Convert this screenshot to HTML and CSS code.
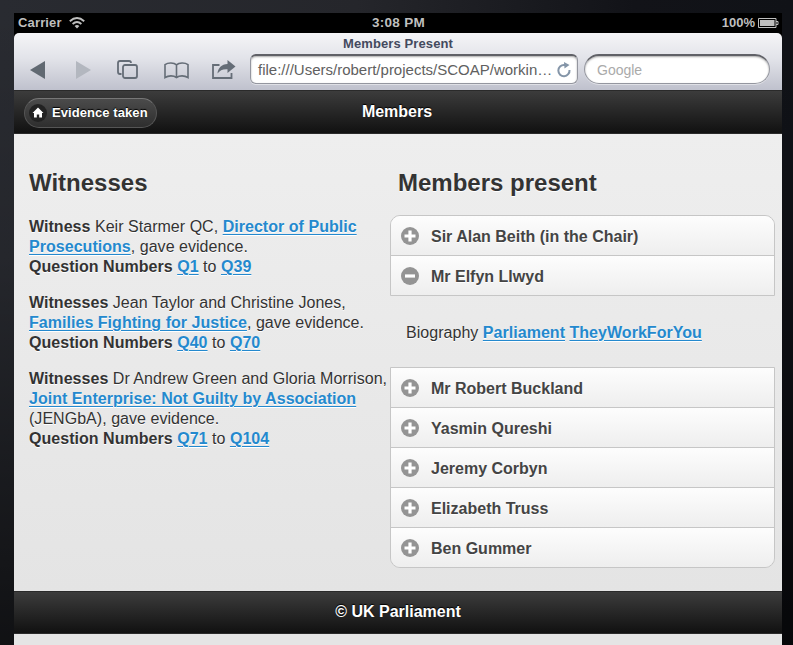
FILE: index.html
```html
<!DOCTYPE html>
<html lang="en">
<head>
<meta charset="utf-8">
<title>Members Present</title>
<link rel="stylesheet" href="styles.css">
</head>
<body>
<svg class="defs" width="0" height="0" aria-hidden="true">
  <symbol id="plus" viewBox="0 0 18 18"><circle cx="9" cy="9" r="9" fill="#949494"/><path d="M9 3.5v11M3.5 9h11" stroke="#fff" stroke-width="3.2"/></symbol>
  <symbol id="minus" viewBox="0 0 18 18"><circle cx="9" cy="9" r="9" fill="#949494"/><path d="M4 9h10" stroke="#fff" stroke-width="3.2"/></symbol>
</svg>
<div class="screen">
  <div class="status">
    <span class="carrier">Carrier
      <svg width="16" height="12" viewBox="0 0 16 12" fill="none" stroke="#bfbfbf" stroke-width="1.9"><path d="M.8 4.2Q8-2.2 15.2 4.2M3.6 7Q8 3.2 12.4 7"/><path d="M5.6 9.1Q8 7 10.4 9.1L8 11.6z" fill="#bfbfbf" stroke="none"/></svg>
    </span>
    <span class="clock">3:08 PM</span>
    <span class="battery">100%
      <svg width="21" height="10" viewBox="0 0 21 10"><path d="M.5.5h17.5v9H.5zM18 3.5h2v3h-2" fill="none" stroke="#bfbfbf"/><path d="M2 2h14.500v6H2z" fill="#bfbfbf"/></svg>
    </span>
  </div>
  <div class="browser">
    <div class="tab-title">Members Present</div>
    <div class="tools">
      <div class="nav">
        <svg width="15" height="18" viewBox="0 0 15 18"><path d="M0 9 15 0v18z" fill="#616972"/></svg>
        <svg width="15" height="18" viewBox="0 0 15 18"><path d="M15 9 0 0v18z" fill="#b3b7bf"/></svg>
        <svg width="21" height="19" viewBox="0 0 21 19" fill="none" stroke="#656d77" stroke-width="1.8"><path d="M4.500 14H3Q1 14 1 12V3Q1 1 3 1h9Q14 1 14 3"/><rect x="6" y="5" width="14" height="13" rx="2"/></svg>
        <svg width="25" height="17" viewBox="0 0 25 17" fill="none" stroke="#656d77" stroke-width="1.6"><path d="M12.500 2.800C10 .4 4 .4 1 2.600V15.500C4.500 13.300 9.500 13.300 12.500 15.500C15.500 13.300 20.500 13.300 24 15.500V2.600C21 .4 15 .4 12.500 2.800V15.500"/></svg>
        <svg width="24" height="19" viewBox="0 0 24 19"><path d="M7.500 5H1v13h18.500v-5" fill="none" stroke="#656d77" stroke-width="1.8"/><path d="M15.500 0 23.500 6.500 15.500 13V9.300C10.500 9 8 10.500 5.500 13.500C6 8 9.500 4.200 15.500 4z" fill="#656d77"/></svg>
      </div>
      <div class="address"><span class="url">file:///Users/robert/projects/SCOAP/workin…</span>
        <svg width="14" height="16" viewBox="0 0 14 16"><path d="M9 3H7.200A5.600 5.600 0 1 0 12.500 8" fill="none" stroke="#8495a8" stroke-width="2"/><path d="M7 0l5.500 3L7.500 6.500z" fill="#8495a8"/></svg>
      </div>
      <div class="search">Google</div>
    </div>
  </div>
  <header class="bar header">
    <a class="back"><svg width="18" height="18" viewBox="0 0 18 18"><circle cx="9" cy="9" r="9" fill="#222"/><path d="M9 3.500 3.500 9H5v4.500h2.800v-3h2.400v3H13V9h1.500z" fill="#fff"/></svg><span>Evidence taken</span></a>
    <h1>Members</h1>
  </header>
  <main class="content">
    <section class="witnesses">
      <h2>Witnesses</h2>
      <p><b>Witness</b> Keir Starmer QC, <a>Director of Public<br>Prosecutions</a>, gave evidence.<br><b>Question Numbers</b> <a>Q1</a> to <a>Q39</a></p>
      <p><b>Witnesses</b> Jean Taylor and Christine Jones,<br><a>Families Fighting for Justice</a>, gave evidence.<br><b>Question Numbers</b> <a>Q40</a> to <a>Q70</a></p>
      <p><b>Witnesses</b> Dr Andrew Green and Gloria Morrison,<br><a>Joint Enterprise: Not Guilty by Association</a><br>(JENGbA), gave evidence.<br><b>Question Numbers</b> <a>Q71</a> to <a>Q104</a></p>
    </section>
    <section class="members">
      <h2>Members present</h2>
      <div class="list first">
        <div class="row"><svg><use href="#plus"/></svg><span>Sir Alan Beith (in the Chair)</span></div>
        <div class="row"><svg><use href="#minus"/></svg><span>Mr Elfyn Llwyd</span></div>
      </div>
      <div class="bio"><span>Biography <a>Parliament</a> <a>TheyWorkForYou</a></span></div>
      <div class="list last">
        <div class="row"><svg><use href="#plus"/></svg><span>Mr Robert Buckland</span></div>
        <div class="row"><svg><use href="#plus"/></svg><span>Yasmin Qureshi</span></div>
        <div class="row"><svg><use href="#plus"/></svg><span>Jeremy Corbyn</span></div>
        <div class="row"><svg><use href="#plus"/></svg><span>Elizabeth Truss</span></div>
        <div class="row"><svg><use href="#plus"/></svg><span>Ben Gummer</span></div>
      </div>
    </section>
  </main>
  <footer class="bar footer"><span>© UK Parliament</span></footer>
  <div class="below"></div>
</div>
</body>
</html>
```
FILE: styles.css
```css
* { box-sizing: border-box; }
body {
  margin: 0; padding: 13px 11px 0 14px; height: 645px; overflow: hidden;
  font: 16px/20px "Liberation Sans", Arial, sans-serif; color: #333;
  background: linear-gradient(180deg, rgba(0,0,0,0) 0, rgba(0,0,0,.1) 40%, rgba(0,0,0,.6) 100%), linear-gradient(90deg, #292b31 0, #25262b 45%, #121318 80%, #101217 100%);
}
svg { display: block; flex: none; }
.defs { position: absolute; }
.screen { height: 632px; display: flex; flex-direction: column; background: #000; }
.status {
  height: 20px; padding: 0 3px 0 4px; display: grid; grid-template-columns: 1fr auto 1fr; align-items: center;
  font-weight: bold; font-size: 13px; line-height: 18px; letter-spacing: .15px; color: #bfbfbf;
}
.carrier, .battery { display: flex; align-items: center; gap: 7px; height: 18px; }
.clock { font-size: 13.5px; letter-spacing: .3px; }
.battery { justify-content: flex-end; gap: 3px; letter-spacing: 0; }
.browser {
  height: 57px; border-radius: 5px 5px 0 0;
  background: linear-gradient(#f5f5f7, #e2e3e9 45%, #bfc1cd);
}
.tab-title { height: 21px; text-align: center; font-weight: bold; font-size: 13px; line-height: 22px; color: #444a5e; letter-spacing: .1px; }
.tools { display: flex; height: 30px; padding-right: 12px; }
.nav { width: 236px; padding: 1px 0 0 16px; display: flex; align-items: center; }
.nav svg:nth-child(2) { margin-left: 31px; }
.nav svg:nth-child(3) { margin-left: 26px; }
.nav svg:nth-child(4) { margin-left: 26px; margin-top: 2px; }
.nav svg:nth-child(5) { margin-left: 23px; margin-top: -1px; }
.address, .search {
  height: 30px; display: flex; align-items: center; background: #fff;
  border: 1px solid #94969f; border-top: 2px solid #606167; box-shadow: inset 0 1px 2px #aaa, 0 1px 0 #dfe0e6;
}
.address { width: 328px; border-radius: 6px; padding: 0 6px 0 7px; justify-content: space-between; color: #606060; }
.url { white-space: nowrap; font-size: 15px; }
.search { width: 186px; margin-left: 6px; border-radius: 15px; padding-left: 12px; color: #aaa; font-size: 14px; }
.bar {
  display: grid; align-items: center; color: #fff; font-weight: bold; text-align: center; text-shadow: 0 -1px 1px #000;
  background: linear-gradient(#3c3c3c, #111); border: 1px solid #2a2a2a; border-width: 1px 0;
}
.header { height: 44px; grid-template-columns: 1fr auto 1fr; }
.header h1 { margin: 0; font-size: 16px; line-height: 20px; position: relative; left: -1px; }
.back {
  justify-self: start; margin: 1px 0 0 10px; width: 133px; height: 30px; border: 1px solid #656565; border-color: #777 #555 #555; border-radius: 15px;
  padding-left: 4px; display: flex; align-items: center; gap: 5px; font-size: 13px; letter-spacing: .07px;
  background: linear-gradient(#4b4b4b, #2e2e2e); white-space: nowrap;
}
.content {
  height: 457px; padding: 0 15px; display: grid; grid-template-columns: 369px 369px;
  background: linear-gradient(#eee, #e4e4e4); text-shadow: 0 1px 0 #fff;
}
h2 { margin: 34px 0 18px; font-size: 24px; line-height: 30px; }
.witnesses h2 { margin-bottom: 19px; }
p { margin: 0 0 16px; white-space: nowrap; letter-spacing: .035px; }
.content a { color: #2489ce; font-weight: bold; text-decoration: underline; text-decoration-thickness: 1px; text-underline-offset: 2px; }
.list { margin: 0 -8px; border: 1px solid #c6c6c6; overflow: hidden; }
.first { margin-top: -1px; border-radius: 10px 10px 0 0; }
.last { border-radius: 0 0 10px 10px; }
.row { height: 40px; padding-left: 10px; display: flex; align-items: center; gap: 12px; font-weight: bold; color: #444; background: linear-gradient(#fdfdfd, #eee); }
.row svg { width: 18px; height: 18px; }
.row + .row { border-top: 1px solid #c6c6c6; }
.row:first-child { height: 39px; }
.row span { padding-top: 2px; }
.bio { height: 71px; padding: 2px 0 0 8px; display: flex; align-items: center; letter-spacing: .035px; }
.footer { height: 43px; padding-bottom: 2px; }
.below { flex: 1; background: #e5e5e5; }
```
